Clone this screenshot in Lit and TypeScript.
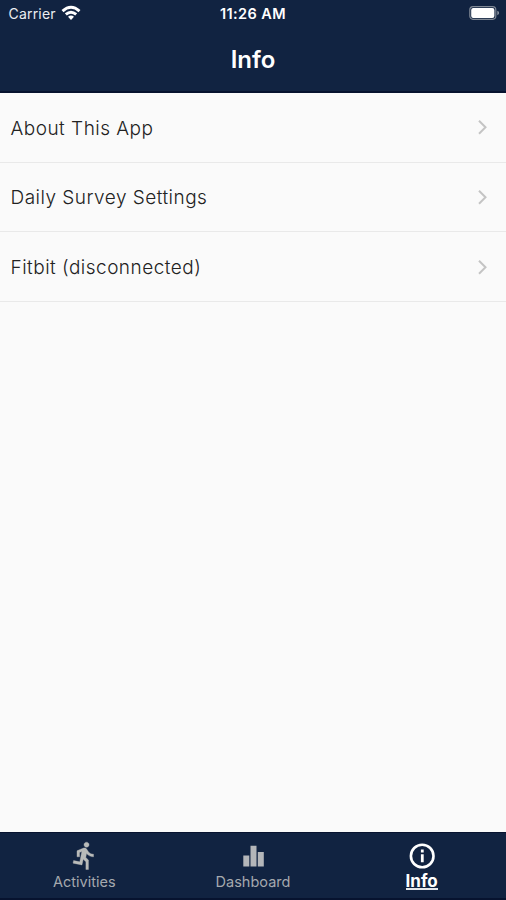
import { LitElement, html, css, svg } from "lit";
import { customElement } from "lit/decorators.js";

@customElement("app-root")
export class AppRoot extends LitElement {
  static styles = css`
    :host {
      display: flex;
      flex-direction: column;
      height: 900px;
      background: #fafafa;
      font-family: Inter, "Liberation Sans", sans-serif;
      overflow: hidden;
    }
    svg { display: block; flex: none; }
    header {
      height: 93px;
      box-sizing: border-box;
      background: #112341;
      color: #fff;
      border-bottom: 2px solid #07132f;
    }
    .status {
      display: grid;
      grid-template-columns: 1fr auto 1fr;
      align-items: center;
      height: 26px;
      padding: 0 6px;
      font-size: 14px;
      line-height: 26px;
    }
    .left { display: flex; align-items: center; gap: 5px; padding-left: 2.5px; color: #eceef1; letter-spacing: 0.2px; }
    .left span, .time { padding-top: 1px; line-height: 25px; }
    .time { font-weight: 600; font-size: 14.5px; letter-spacing: 0.4px; }
    .battery { justify-self: end; }
    h1 {
      margin: 0;
      height: 65px;
      line-height: 68px;
      text-align: center;
      font-size: 24px;
      font-weight: 600;
    }
    main { flex: 1; }
    .row {
      display: flex;
      align-items: center;
      justify-content: space-between;
      box-sizing: border-box;
      height: 69.67px;
      padding: 0 18px 0 10.5px;
      border-bottom: 1.5px solid #e9e9e9;
      font-size: 19px;
      font-weight: 300;
      letter-spacing: 0.48px;
      color: #222;
    }
    .row span { padding-top: 2px; }
    nav {
      display: grid;
      grid-template-columns: repeat(3, 1fr);
      height: 68px;
      box-sizing: border-box;
      background: #112341;
      border-top: 1px solid #07132f;
      border-bottom: 2px solid #07132f;
    }
    .tab {
      display: flex;
      flex-direction: column;
      align-items: center;
      padding-top: 7px;
      color: #a5a9ae;
      font-size: 14.5px;
      line-height: 19px;
    }
    .active { color: #fff; font-size: 17px; font-weight: 700; }
    .active span { height: 16px; line-height: 18px; border-bottom: 2px solid #e4e6ea; }
  `;

  private rows = ["About This App", "Daily Survey Settings", "Fitbit (disconnected)"];

  private tabs = [
    {
      label: "Activities",
      icon: svg`<path fill="#b9bbb9" stroke="#b9bbb9" stroke-width=".3" transform="translate(1.4 .3) scale(1.27)" d="M13.49 5.48c1.1 0 2-.9 2-2s-.9-2-2-2-2 .9-2 2 .9 2 2 2zm-3.6 13.9l1-4.4 2.1 2v6h2v-7.5l-2.1-2 .6-3c1.3 1.5 3.3 2.5 5.5 2.5v-2c-1.9 0-3.5-1-4.3-2.4l-1-1.6c-.4-.6-1-1-1.7-1-.3 0-.5.1-.8.1l-5.2 2.2v4.7h2v-3.4l1.8-.7-1.6 8.1-4.9-1-.4 2 7 1.4z"/>`,
    },
    {
      label: "Dashboard",
      icon: svg`<path fill="#b4b6b9" d="M6.3 15.5h6v11h-6zM13.5 5.7h6v20.8h-6zM20.8 12h6v14.5h-6z"/>`,
    },
    {
      label: "Info",
      active: true,
      icon: svg`<circle cx="16.2" cy="16" r="11.3" fill="none" stroke="#fff" stroke-width="2.6"/><path fill="#fff" d="M14.9 9.6h2.8v2.8h-2.8zM14.9 14.2h2.8v8h-2.8z"/>`,
    },
  ];

  render() {
    return html`
      <header>
        <div class="status">
          <div class="left">
            <span>Carrier</span>
            <svg width="20" height="16" viewBox="0 0 20 16">
              <g fill="none" stroke="#fff" stroke-width="2.9">
                <path d="M1.5 6.1Q10-1.7 18.5 6.1"/>
                <path d="M4.8 9.4Q10 4.9 15.2 9.4"/>
              </g>
              <path fill="#fff" d="M7 11.7Q10 9.2 13 11.7L10 15z"/>
            </svg>
          </div>
          <span class="time">11:26 AM</span>
          <svg class="battery" width="31" height="14" viewBox="0 0 31 14">
            <rect x=".8" y=".7" width="26" height="12.6" rx="3.2" fill="none" stroke="#7f8895" stroke-width="1.2"/>
            <rect x="2.2" y="2" width="23.2" height="10" rx="2" fill="#fff"/>
            <path fill="#8c94a1" d="M28.3 4.8q1.8.6 1.8 2.2t-1.8 2.2z"/>
          </svg>
        </div>
        <h1>Info</h1>
      </header>
      <main>
        ${this.rows.map(
          (label) => html`<div class="row">
            <span>${label}</span>
            <svg width="11" height="16" viewBox="0 0 11 16">
              <path d="M2 1.8 8.5 8.3 2 14.8" fill="none" stroke="#c4c4c4" stroke-width="2"/>
            </svg>
          </div>`
        )}
      </main>
      <nav>
        ${this.tabs.map(
          (t) => html`<div class="tab ${t.active ? "active" : ""}">
            <svg width="32" height="32" viewBox="0 0 32 32">${t.icon}</svg>
            <span>${t.label}</span>
          </div>`
        )}
      </nav>
    `;
  }
}
